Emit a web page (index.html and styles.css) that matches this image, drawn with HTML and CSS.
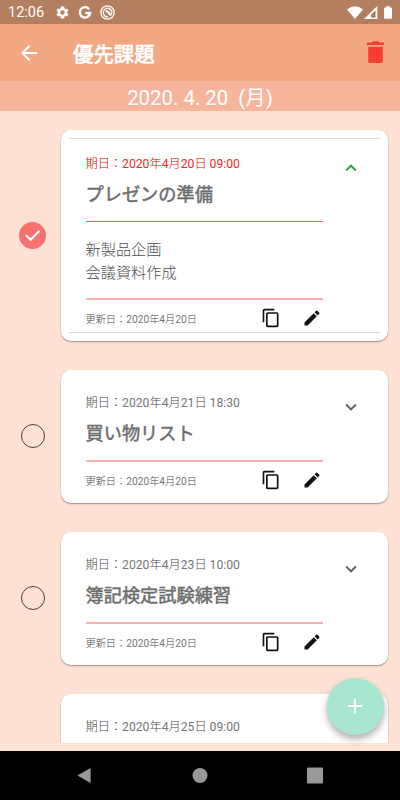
FILE: index.html
```
<!DOCTYPE html>
<html lang="ja">
<head>
<meta charset="utf-8">
<title>優先課題</title>
<link rel="stylesheet" href="styles.css">
</head>
<body>
<svg class="defs" width="0" height="0">
  <symbol id="copy" viewBox="0 0 24 24"><path d="M16 1H4C2.9 1 2 1.9 2 3v14h2V3h12zm3 4H8C6.900 5 6 5.900 6 7v14c0 1.100.9 2 2 2h11c1.100 0 2-.9 2-2V7c0-1.100-.9-2-2-2zm0 16H8V7h11z"/></symbol>
  <symbol id="edit" viewBox="0 0 24 24"><path d="M3 17.250V21h3.750L17.810 9.940l-3.750-3.750zM20.710 7.040a1 1 0 0 0 0-1.410l-2.340-2.340a1 1 0 0 0-1.410 0l-1.830 1.830 3.750 3.750z"/></symbol>
  <symbol id="chevron" viewBox="0 0 24 24"><path d="M7.410 8.590 12 13.170l4.590-4.580L18 10l-6 6-6-6z"/></symbol>
</svg>
<div class="screen">
  <div class="status">
    <span class="clock">12:06</span>
    <svg class="gear" viewBox="0 0 24 24"><path fill-rule="evenodd" d="M19.400 13c.1-.7.1-1.300 0-2l2.200-1.700-2.200-3.800-2.600 1a8 8 0 0 0-1.700-1L14.700 2.500H9.300l-.4 3a8 8 0 0 0-1.700 1l-2.600-1-2.200 3.800L4.600 11a8 8 0 0 0 0 2l-2.200 1.700 2.200 3.800 2.600-1a8 8 0 0 0 1.700 1l.4 3h5.400l.4-3a8 8 0 0 0 1.700-1l2.600 1 2.200-3.800zM12 15.500a3.500 3.500 0 1 1 0-7 3.500 3.500 0 0 1 0 7z"/></svg>
    <svg class="google" viewBox="0 0 14 14"><path d="M11.200 3.200A5.200 5.200 0 1 0 12.200 7H7.200"/></svg>
    <svg class="radar" viewBox="0 0 14 14"><circle cx="7" cy="7" r="6.200"/><path d="M10.200 9.500A4 4 0 1 0 7.500 11"/><path class="thick" d="M5.200 5.800c2-.8 3 1.200 4.800 4"/></svg>
    <span class="fill"></span>
    <svg class="wifi" viewBox="0 0 16 13"><path d="M0 3.500Q8-3 16 3.500L8 13z"/></svg>
    <svg class="signal" viewBox="0 0 14 13"><path d="M13.300 0v13H0z"/><path class="dark" d="M11.400 4.500v6.900H7.200V8.700z"/><path class="mid" d="M10.300 7.200v3.200H8.500V9z"/></svg>
    <svg class="battery" viewBox="0 0 9 14"><path d="M2.500 0h4v1.500H8q1 0 1 1V13q0 1-1 1H1q-1 0-1-1V2.500q0-1 1-1h1.500z"/></svg>
  </div>
  <header class="bar">
    <svg class="back" viewBox="0 0 24 24"><path d="M20 11H7.830l5.590-5.590L12 4l-8 8 8 8 1.410-1.410L7.830 13H20z"/></svg>
    <h1>優先課題</h1>
    <svg class="trash" viewBox="0 0 18 24"><path d="M1.300 6h15.400v15.200q0 2-2 2H3.300q-2 0-2-2zM0 1.300h5L6 0h6l1 1.300h5V4H0z"/></svg>
  </header>
  <div class="today">2020. 4. 20&nbsp; (月)</div>
  <main class="list">
    <div class="row">
      <svg class="check" viewBox="0 0 27 27"><circle cx="13.500" cy="13.500" r="13.500"/><path d="M7 13.200l4.600 4.500 8.700-8.700"/></svg>
      <article class="card open">
        <div class="text">
          <p class="due late">期日：<b>2020</b>年<b>4</b>月<b>20</b>日<b> 09:00</b></p>
          <h2>プレゼンの準備</h2>
          <p class="note">新製品企画<br>会議資料作成</p>
          <div class="foot"><span>更新日：<b>2020</b>年<b>4</b>月<b>20</b>日</span><svg class="copy"><use href="#copy"/></svg><svg class="edit"><use href="#edit"/></svg></div>
        </div>
        <svg class="chev up"><use href="#chevron"/></svg>
      </article>
    </div>
    <div class="row">
      <span class="ring"></span>
      <article class="card">
        <div class="text">
          <p class="due">期日：<b>2020</b>年<b>4</b>月<b>21</b>日<b> 18:30</b></p>
          <h2>買い物リスト</h2>
          <div class="foot"><span>更新日：<b>2020</b>年<b>4</b>月<b>20</b>日</span><svg class="copy"><use href="#copy"/></svg><svg class="edit"><use href="#edit"/></svg></div>
        </div>
        <svg class="chev"><use href="#chevron"/></svg>
      </article>
    </div>
    <div class="row">
      <span class="ring"></span>
      <article class="card">
        <div class="text">
          <p class="due">期日：<b>2020</b>年<b>4</b>月<b>23</b>日<b> 10:00</b></p>
          <h2>簿記検定試験練習</h2>
          <div class="foot"><span>更新日：<b>2020</b>年<b>4</b>月<b>20</b>日</span><svg class="copy"><use href="#copy"/></svg><svg class="edit"><use href="#edit"/></svg></div>
        </div>
        <svg class="chev"><use href="#chevron"/></svg>
      </article>
    </div>
    <div class="row">
      <span class="ring hidden"></span>
      <article class="card last">
        <div class="text"><p class="due">期日：<b>2020</b>年<b>4</b>月<b>25</b>日<b> 09:00</b></p></div>
      </article>
    </div>
  </main>
  <button class="fab" aria-label="追加"><svg viewBox="0 0 16 16"><path d="M8 .7v14.600M.7 8h14.600"/></svg></button>
  <nav class="nav">
    <svg viewBox="0 0 16 18"><path d="M15 1v16L1 9z"/></svg>
    <svg viewBox="0 0 16 16"><circle cx="8" cy="8" r="7.500"/></svg>
    <svg viewBox="0 0 16 16"><rect width="16" height="16" rx="1"/></svg>
  </nav>
</div>
</body>
</html>
```

FILE: styles.css
```
* { box-sizing: border-box; }
body { margin: 0; font-family: Roboto, "Noto Sans CJK JP", sans-serif; }
h1, h2, p { margin: 0; font-weight: 400; }
b { font-weight: 400; color: #767676; }
svg { display: block; flex: none; fill: currentColor; }
.defs { position: absolute; }
.screen { position: relative; width: 400px; height: 800px; display: flex; flex-direction: column; overflow: hidden; background: #ffe2d4; }
.status { height: 24px; flex: none; display: flex; align-items: center; padding: 1px 8px 0; background: #b37f60; color: #fff; }
.clock { width: 47px; font-size: 14.500px; line-height: 24px; padding-top: 1px; }
.gear { width: 15px; height: 15px; }
.google { width: 14px; height: 14px; margin-left: 8px; fill: none; stroke: #fff; stroke-width: 2.300; }
.radar { width: 15px; height: 15px; margin-left: 8px; fill: none; stroke: #fff; stroke-width: 1.200; }
.radar .thick { stroke-width: 2; }
.fill { flex: 1; }
.wifi { width: 16px; height: 13px; }
.signal { width: 14px; height: 13px; margin-left: 1px; }
.signal .dark { fill: #9c6134; }
.signal .mid { fill: #c3977c; }
.battery { width: 8px; height: 13px; margin: 0 0 0 6px; }
.bar { height: 57px; flex: none; display: flex; align-items: center; padding: 0 16px 0 17px; background: #f2a983; color: #fff; }
.back { width: 24px; height: 24px; }
.bar h1 { flex: 1; margin-left: 32px; padding-top: 4px; font-size: 20.4px; line-height: 30px; -webkit-text-stroke: .7px #fff; }
.trash { width: 17px; height: 23px; color: #f93d33; }
.today { height: 30px; flex: none; background: #f7b59c; color: #fff; font-size: 20.4px; line-height: 34px; text-align: center; white-space: nowrap; }
.list { height: 632px; flex: none; padding: 19px 12px 0 0; display: flex; flex-direction: column; gap: 28.500px; overflow: hidden; color: #6d6d6d; }
.row { display: flex; align-items: center; flex: none; }
.check { width: 27px; height: 27px; margin: 0 15px 0 19px; }
.check circle { fill: #f87171; }
.check path { fill: none; stroke: #fff; stroke-width: 2.100; }
.ring { width: 24px; height: 24px; flex: none; margin: 0 16px 0 21px; border: 1px solid #44403e; border-radius: 50%; }
.ring.hidden { visibility: hidden; }
.card { position: relative; width: 327px; height: 133.500px; padding: 23px 25px 0 24.500px; display: flex; background: #fff; border-radius: 10px; box-shadow: 0 1px 1.500px rgba(80,50,40,.5); }
.card.open { height: 211px; }
.card.open::before { content: ""; position: absolute; inset: 8px 8px; border: solid #dadada; border-width: 1px 0; }
.text { width: 237px; flex: none; font-weight: 300; }
.due { font-size: 12.200px; line-height: 20px; font-weight: 300; color: #4a4a4a; }
.open .due { padding-top: 1px; margin-bottom: -1px; }
.due.late { color: #e80000; }
.due.late b { color: #f52a26; }
h2 { height: 49px; padding-top: 7px; font-size: 18.200px; line-height: 28px; -webkit-text-stroke: .5px #6d6d6d; border-bottom: 2px solid #fbb3b1; }
.open h2 { padding-top: 8px; border-bottom: 1px solid #f46a68; }
.note { height: 78px; padding-top: 17px; font-size: 15.200px; line-height: 22.500px; font-weight: 300; color: #505050; border-bottom: 2px solid #fbb3b1; }
.foot { height: 36px; display: flex; align-items: center; font-size: 10.200px; font-weight: 300; color: #4a4a4a; }
.foot span { flex: 1; padding-top: 1px; }
.foot svg { width: 20px; height: 20px; color: #111; }
.foot .copy { margin-right: 21px; }
.foot .edit { margin-right: .5px; }
.chev { width: 22px; height: 22px; margin: 3px 0 0 17.500px; color: #5f5f5f; }
.chev.up { margin-top: 4px; color: #2ba13b; transform: rotate(180deg); }
.fab { position: absolute; left: 326.500px; top: 677.500px; width: 57.500px; height: 57.500px; padding: 0; border: 0; border-radius: 50%; display: grid; place-items: center; background: #a8e6cf; box-shadow: 0 4px 7px rgba(0,0,0,.32); }
.fab svg { width: 16px; height: 16px; stroke: #fff; stroke-width: 1.900; }
.nav { height: 49px; margin-top: auto; flex: none; display: flex; justify-content: space-between; align-items: center; padding: 0 77px 0 76px; background: #000; color: #999; }
.nav svg { width: 16px; height: 17px; }
```
